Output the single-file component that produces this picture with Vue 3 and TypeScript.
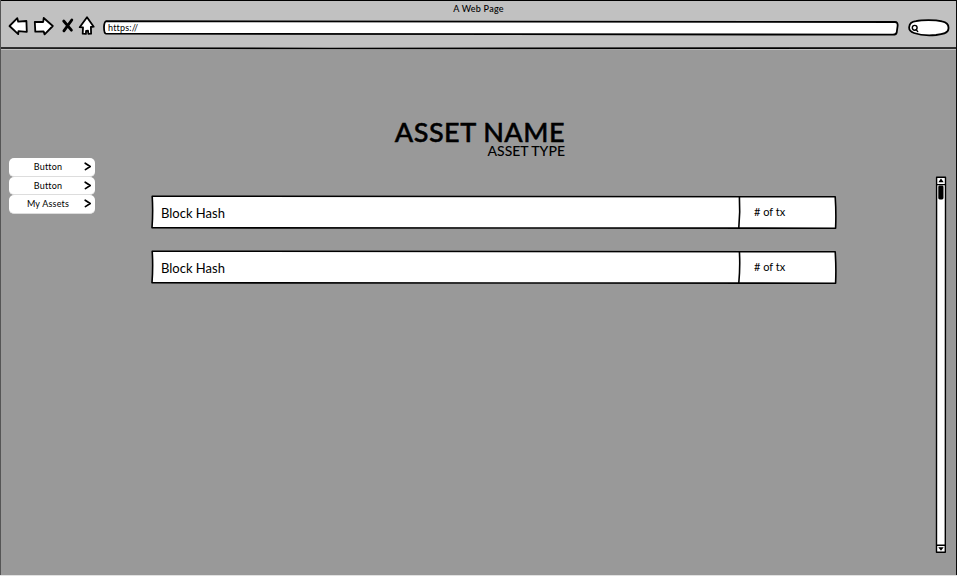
<script setup lang="ts">
interface Block { hash: string; count: string }

const menu: string[] = ['Button', 'Button', 'My Assets']
const blocks: Block[] = [
  { hash: 'Block Hash', count: '# of tx' },
  { hash: 'Block Hash', count: '# of tx' },
]
</script>

<template>
  <div class="window">
    <header class="chrome">
      <div class="title"><span>A Web Page</span></div>
      <div class="toolbar">
        <svg class="nav" width="90" height="24" viewBox="0 0 90 24">
          <path class="shape" d="M1.5 11 L9.3 3.2 L10.2 6.7 L18.4 6 L18.8 16.8 L10.4 16.2 L10.2 19.2 Z" />
          <path class="shape" d="M26.8 7 L35.2 7 L35.7 3 L44.8 11 L36.6 19.4 L35.6 16.4 L27.3 16.6 Z" />
          <path class="cross" d="M55.7 6 L63.4 15.2 M63.8 5 L55.9 15.8" />
          <path class="shape" d="M79 2.3 L85.7 11.7 L82.9 12 L83.1 18.7 L80.4 18.9 L80 15.7 L78.1 15.8 L77.9 18.9 L74.7 18.7 L75 12.4 L71.7 12.2 Z" />
        </svg>
        <div class="address">
          <svg width="796" height="16" viewBox="0 0 796 16">
            <path class="shape" d="M3 1.2 Q300 1.7 792 2 Q795 2 794.6 6 L793.7 12.5 Q793.3 14.7 790 14.7 Q330 14.2 3 13.6 Q1 13.5 1 7 Q1.2 2 3 1.2 Z" />
          </svg>
          <span>https://</span>
        </div>
        <svg class="search" width="42" height="18" viewBox="0 0 42 18">
          <path class="shape" d="M8 2.2 C14 .8 27 .7 34 2.4 C39.5 3.4 41 6 40.4 10 C40.2 14.5 34 15.3 28 16 C20 16.7 11 15.8 6 14 C2 12.7 .8 11 1.2 8 C1.5 4.5 4 2.7 8 2.2 Z" />
          <circle class="lens" cx="6.7" cy="8.8" r="2.4" />
          <path class="lens" d="M8.2 10.6 L9.7 12.6" />
        </svg>
      </div>
      <svg class="rule" width="957" height="3" viewBox="0 0 957 3">
        <path d="M0 1 L330 1.5 L957 1" />
      </svg>
    </header>

    <main class="page">
      <nav class="menu">
        <button v-for="(item, i) in menu" :key="i" type="button">
          <span>{{ item }}</span>
          <svg width="8" height="9" viewBox="0 0 8 9"><path d="M1.2 1.2 L6.2 4.5 L1.4 7.6" /></svg>
        </button>
      </nav>

      <section class="content">
        <div class="heading">
          <h1>ASSET NAME</h1>
          <h2>ASSET TYPE</h2>
        </div>
        <div v-for="(block, i) in blocks" :key="i" class="block">
          <svg width="686" height="35" viewBox="0 0 686 35">
            <path class="frame" d="M1.2 1.2 Q340 1.5 684.2 1.8 Q685.3 18 684.6 33.2 Q340 33.7 1 32.8 Q2.2 17 1.2 1.2 Z" />
            <path class="frame" d="M588.4 1.8 Q589.3 17 587.8 33" />
          </svg>
          <span class="hash">{{ block.hash }}</span>
          <span class="count">{{ block.count }}</span>
        </div>
      </section>

      <svg class="scrollbar" width="12" height="378" viewBox="0 0 12 378">
        <path class="track" d="M1.6 1.2 L10.5 1.2 L10.3 376.2 L1.5 376.2 Z" />
        <path class="track" d="M1.5 8.6 H10.5 M1.5 369.2 H10.5" />
        <path d="M6 2.5 L8.7 6.2 H3.4 Z M3.3 371.3 H8.7 L6 374.8 Z" />
        <rect x="3.3" y="9.5" width="5.2" height="14" rx="1.4" />
      </svg>
    </main>
  </div>
</template>

<style>
body { background: #e2e2e2; }
</style>

<style scoped>
.window {
  box-sizing: border-box;
  width: 957px;
  height: 575px;
  overflow: hidden;
  display: flex;
  flex-direction: column;
  background: #999;
  border-left: 1px solid #555;
  border-right: 1px solid #080808;
  color: #000;
  font-family: Lato, "Liberation Sans", sans-serif;
}
.window svg { display: block; flex: none; }
.chrome {
  flex: none;
  box-sizing: border-box;
  height: 50px;
  background: #c1c1c1;
  border-top: 1px solid #000;
  display: flex;
  flex-direction: column;
}
.title {
  height: 12px;
  padding-top: 2px;
  font-size: 9px;
  line-height: 12px;
  text-align: center;
  font-weight: 500;
  letter-spacing: .25px;
}
.toolbar { display: flex; height: 33px; }
.nav { margin-left: 7px; }
.shape { fill: #fff; stroke: #000; stroke-width: 1.8; stroke-linejoin: round; }
.cross { fill: none; stroke: #000; stroke-width: 2.8; stroke-linecap: round; }
.address { display: grid; align-self: flex-start; margin: 5px 0 0 5px; }
.address > * { grid-area: 1 / 1; }
.address span { padding-left: 5px; font-size: 9px; line-height: 15px; letter-spacing: .2px; }
.search { margin: 4px 0 0 9px; }
.lens { fill: none; stroke: #000; stroke-width: 1.4; stroke-linecap: round; }
.rule { margin-left: -1px; }
.rule path { fill: none; stroke: #000; stroke-width: 1.6; }
.page { flex: 1; display: flex; align-items: flex-start; }
.menu { flex: none; width: 86px; margin: 108px 0 0 8px; }
.menu button {
  display: flex;
  align-items: center;
  box-sizing: border-box;
  width: 86px;
  height: 18.6px;
  margin: 0;
  padding: 0 3px 0 0;
  border: 0;
  border-bottom: 1px solid #ddd;
  border-radius: 5px;
  background: #fff;
  color: #000;
  font: 9px Lato, "Liberation Sans", sans-serif;
  letter-spacing: .2px;
}
.menu span { flex: 1; padding-left: 3px; text-align: center; }
.menu path { fill: none; stroke: #000; stroke-width: 1.7; stroke-linecap: round; stroke-linejoin: round; }
.content { flex: none; width: 686px; margin: 68px 0 0 56px; }
.heading { display: flex; flex-direction: column; width: 414px; height: 77px; align-items: flex-end; }
h1, h2 { margin: 0; font-weight: 500; white-space: nowrap; }
h1 { font-size: 27px; line-height: 27px; letter-spacing: .5px; -webkit-text-stroke: .5px #000; }
h2 { font-size: 14px; line-height: 12px; }
.block { display: grid; grid-template-columns: 588px 98px; align-items: center; height: 35px; margin-bottom: 20px; }
.block svg { grid-area: 1 / 1 / 2 / 3; }
.hash { grid-area: 1 / 1; padding-left: 10px; font-size: 13px; line-height: 16px; }
.count { grid-area: 1 / 2; padding: 0 0 2px 15px; font-size: 11px; line-height: 14px; }
.frame { fill: #fff; stroke: #000; stroke-width: 1.6; stroke-linejoin: round; }
.scrollbar { margin: 126px 0 0 98px; }
.track { fill: #fff; stroke: #000; stroke-width: 1.4; stroke-linejoin: round; }
</style>
